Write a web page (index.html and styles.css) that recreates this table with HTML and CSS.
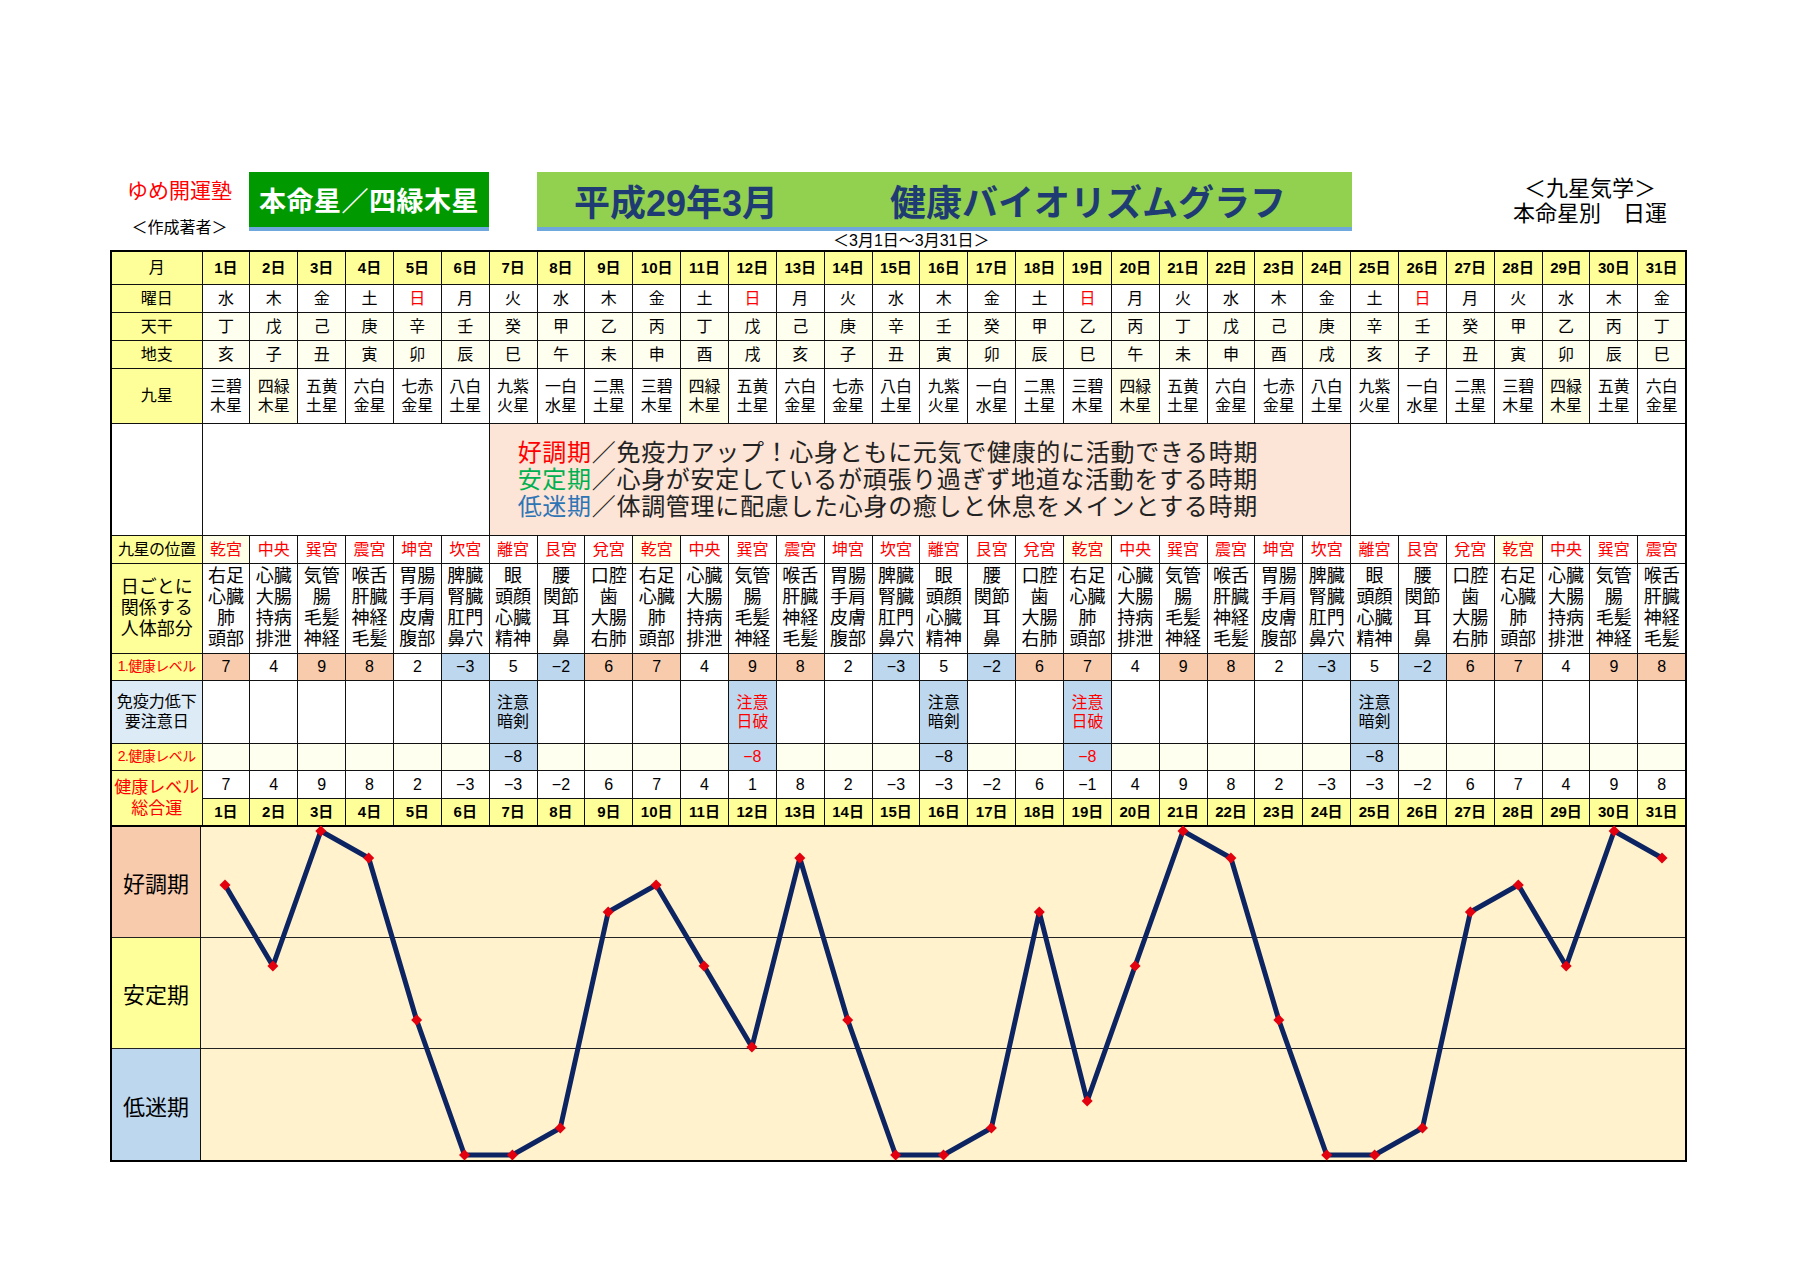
FILE: index.html
```html
<!DOCTYPE html>
<html lang="ja">
<head>
<meta charset="utf-8">
<title>健康バイオリズムグラフ</title>
<link rel="stylesheet" href="styles.css">
</head>
<body>
<div class="page">
  <div class="header">
    <div class="author">
      <div class="org">ゆめ開運塾</div>
      <div class="by">＜作成著者＞</div>
    </div>
    <div class="honmei">本命星／四緑木星</div>
    <div class="titlewrap">
      <div class="title"><span>平成29年3月</span><span>健康バイオリズムグラフ</span></div>
      <div class="range">＜3月1日～3月31日＞</div>
    </div>
    <div class="kigaku">
      <div>＜九星気学＞</div>
      <div>本命星別　日運</div>
    </div>
  </div>

  <table class="grid">
    <colgroup><col class="c0"><col span="31"></colgroup>
    <tr class="r-head days">
      <th class="lab">月</th>
      <td>1日</td><td>2日</td><td>3日</td><td>4日</td><td>5日</td><td>6日</td><td>7日</td><td>8日</td><td>9日</td><td>10日</td><td>11日</td><td>12日</td><td>13日</td><td>14日</td><td>15日</td><td>16日</td><td>17日</td><td>18日</td><td>19日</td><td>20日</td><td>21日</td><td>22日</td><td>23日</td><td>24日</td><td>25日</td><td>26日</td><td>27日</td><td>28日</td><td>29日</td><td>30日</td><td>31日</td>
    </tr>
    <tr class="r-s">
      <th class="lab">曜日</th>
      <td>水</td><td>木</td><td>金</td><td>土</td><td class="red">日</td><td>月</td><td>火</td><td>水</td><td>木</td><td>金</td><td>土</td><td class="red">日</td><td>月</td><td>火</td><td>水</td><td>木</td><td>金</td><td>土</td><td class="red">日</td><td>月</td><td>火</td><td>水</td><td>木</td><td>金</td><td>土</td><td class="red">日</td><td>月</td><td>火</td><td>水</td><td>木</td><td>金</td>
    </tr>
    <tr class="r-s cream">
      <th class="lab">天干</th>
      <td>丁</td><td>戊</td><td>己</td><td>庚</td><td>辛</td><td>壬</td><td>癸</td><td>甲</td><td>乙</td><td>丙</td><td>丁</td><td>戊</td><td>己</td><td>庚</td><td>辛</td><td>壬</td><td>癸</td><td>甲</td><td>乙</td><td>丙</td><td>丁</td><td>戊</td><td>己</td><td>庚</td><td>辛</td><td>壬</td><td>癸</td><td>甲</td><td>乙</td><td>丙</td><td>丁</td>
    </tr>
    <tr class="r-s cream">
      <th class="lab">地支</th>
      <td>亥</td><td>子</td><td>丑</td><td>寅</td><td>卯</td><td>辰</td><td>巳</td><td>午</td><td>未</td><td>申</td><td>酉</td><td>戌</td><td>亥</td><td>子</td><td>丑</td><td>寅</td><td>卯</td><td>辰</td><td>巳</td><td>午</td><td>未</td><td>申</td><td>酉</td><td>戌</td><td>亥</td><td>子</td><td>丑</td><td>寅</td><td>卯</td><td>辰</td><td>巳</td>
    </tr>
    <tr class="r-star">
      <th class="lab">九星</th>
      <td>三碧<br>木星</td><td class="cr">四緑<br>木星</td><td>五黄<br>土星</td><td>六白<br>金星</td><td>七赤<br>金星</td><td>八白<br>土星</td><td>九紫<br>火星</td><td>一白<br>水星</td><td>二黒<br>土星</td>
      <td>三碧<br>木星</td><td class="cr">四緑<br>木星</td><td>五黄<br>土星</td><td>六白<br>金星</td><td>七赤<br>金星</td><td>八白<br>土星</td><td>九紫<br>火星</td><td>一白<br>水星</td><td>二黒<br>土星</td>
      <td>三碧<br>木星</td><td class="cr">四緑<br>木星</td><td>五黄<br>土星</td><td>六白<br>金星</td><td>七赤<br>金星</td><td>八白<br>土星</td><td>九紫<br>火星</td><td>一白<br>水星</td><td>二黒<br>土星</td>
      <td>三碧<br>木星</td><td class="cr">四緑<br>木星</td><td>五黄<br>土星</td><td>六白<br>金星</td>
    </tr>
    <tr class="r-leg">
      <th class="blank"></th>
      <td colspan="6"></td>
      <td colspan="18" class="legend">
        <p><span class="red">好調期</span>／免疫力アップ！心身ともに元気で健康的に活動できる時期</p>
        <p><span class="green">安定期</span>／心身が安定しているが頑張り過ぎず地道な活動をする時期</p>
        <p><span class="blue">低迷期</span>／体調管理に配慮した心身の癒しと休息をメインとする時期</p>
      </td>
      <td colspan="7"></td>
    </tr>
    <tr class="r-s pal">
      <th class="lab lab-pos">九星の位置</th>
      <td class="cr">乾宮</td><td>中央</td><td>巽宮</td><td>震宮</td><td>坤宮</td><td>坎宮</td><td>離宮</td><td>艮宮</td><td>兌宮</td>
      <td class="cr">乾宮</td><td>中央</td><td>巽宮</td><td>震宮</td><td>坤宮</td><td>坎宮</td><td>離宮</td><td>艮宮</td><td>兌宮</td>
      <td class="cr">乾宮</td><td>中央</td><td>巽宮</td><td>震宮</td><td>坤宮</td><td>坎宮</td><td>離宮</td><td>艮宮</td><td>兌宮</td>
      <td class="cr">乾宮</td><td>中央</td><td>巽宮</td><td>震宮</td>
    </tr>
    <tr class="r-body">
      <th class="lab lab-body">日ごとに<br>関係する<br>人体部分</th>
      <td>右足<br>心臓<br>肺<br>頭部</td><td>心臓<br>大腸<br>持病<br>排泄</td><td>気管<br>腸<br>毛髪<br>神経</td><td>喉舌<br>肝臓<br>神経<br>毛髪</td><td>胃腸<br>手肩<br>皮膚<br>腹部</td><td>脾臓<br>腎臓<br>肛門<br>鼻穴</td><td>眼<br>頭顔<br>心臓<br>精神</td><td>腰<br>関節<br>耳<br>鼻</td><td>口腔<br>歯<br>大腸<br>右肺</td>
      <td>右足<br>心臓<br>肺<br>頭部</td><td>心臓<br>大腸<br>持病<br>排泄</td><td>気管<br>腸<br>毛髪<br>神経</td><td>喉舌<br>肝臓<br>神経<br>毛髪</td><td>胃腸<br>手肩<br>皮膚<br>腹部</td><td>脾臓<br>腎臓<br>肛門<br>鼻穴</td><td>眼<br>頭顔<br>心臓<br>精神</td><td>腰<br>関節<br>耳<br>鼻</td><td>口腔<br>歯<br>大腸<br>右肺</td>
      <td>右足<br>心臓<br>肺<br>頭部</td><td>心臓<br>大腸<br>持病<br>排泄</td><td>気管<br>腸<br>毛髪<br>神経</td><td>喉舌<br>肝臓<br>神経<br>毛髪</td><td>胃腸<br>手肩<br>皮膚<br>腹部</td><td>脾臓<br>腎臓<br>肛門<br>鼻穴</td><td>眼<br>頭顔<br>心臓<br>精神</td><td>腰<br>関節<br>耳<br>鼻</td><td>口腔<br>歯<br>大腸<br>右肺</td>
      <td>右足<br>心臓<br>肺<br>頭部</td><td>心臓<br>大腸<br>持病<br>排泄</td><td>気管<br>腸<br>毛髪<br>神経</td><td>喉舌<br>肝臓<br>神経<br>毛髪</td>
    </tr>
    <tr class="r-lv">
      <th class="lab lab-lv">1.健康レベル</th>
      <td class="hi">7</td><td>4</td><td class="hi">9</td><td class="hi">8</td><td>2</td><td class="lo">−3</td><td>5</td><td class="lo">−2</td><td class="hi">6</td>
      <td class="hi">7</td><td>4</td><td class="hi">9</td><td class="hi">8</td><td>2</td><td class="lo">−3</td><td>5</td><td class="lo">−2</td><td class="hi">6</td>
      <td class="hi">7</td><td>4</td><td class="hi">9</td><td class="hi">8</td><td>2</td><td class="lo">−3</td><td>5</td><td class="lo">−2</td><td class="hi">6</td>
      <td class="hi">7</td><td>4</td><td class="hi">9</td><td class="hi">8</td>
    </tr>
    <tr class="r-imm">
      <th class="lab lab-imm">免疫力低下<br>要注意日</th>
      <td></td><td></td><td></td><td></td><td></td><td></td><td class="lo">注意<br>暗剣</td><td></td><td></td><td></td><td></td><td class="lo red">注意<br>日破</td><td></td><td></td><td></td><td class="lo">注意<br>暗剣</td><td></td><td></td><td class="lo red">注意<br>日破</td><td></td><td></td><td></td><td></td><td></td><td class="lo">注意<br>暗剣</td><td></td><td></td><td></td><td></td><td></td><td></td>
    </tr>
    <tr class="r-lv cream">
      <th class="lab lab-lv">2.健康レベル</th>
      <td></td><td></td><td></td><td></td><td></td><td></td><td class="lo">−8</td><td></td><td></td><td></td><td></td><td class="lo red">−8</td><td></td><td></td><td></td><td class="lo">−8</td><td></td><td></td><td class="lo red">−8</td><td></td><td></td><td></td><td></td><td></td><td class="lo">−8</td><td></td><td></td><td></td><td></td><td></td><td></td>
    </tr>
    <tr class="r-s">
      <th class="lab lab-total" rowspan="2">健康レベル<br>総合運</th>
      <td>7</td><td>4</td><td>9</td><td>8</td><td>2</td><td>−3</td><td>−3</td><td>−2</td><td>6</td><td>7</td><td>4</td><td>1</td><td>8</td><td>2</td><td>−3</td><td>−3</td><td>−2</td><td>6</td><td>−1</td><td>4</td><td>9</td><td>8</td><td>2</td><td>−3</td><td>−3</td><td>−2</td><td>6</td><td>7</td><td>4</td><td>9</td><td>8</td>
    </tr>
    <tr class="r-s days">
      <td>1日</td><td>2日</td><td>3日</td><td>4日</td><td>5日</td><td>6日</td><td>7日</td><td>8日</td><td>9日</td><td>10日</td><td>11日</td><td>12日</td><td>13日</td><td>14日</td><td>15日</td><td>16日</td><td>17日</td><td>18日</td><td>19日</td><td>20日</td><td>21日</td><td>22日</td><td>23日</td><td>24日</td><td>25日</td><td>26日</td><td>27日</td><td>28日</td><td>29日</td><td>30日</td><td>31日</td>
    </tr>
  </table>

  <div class="chart">
    <div class="bands">
      <div class="band b1">好調期</div>
      <div class="band b2">安定期</div>
      <div class="band b3">低迷期</div>
    </div>
    <div class="plot">
      <svg width="1484" height="333" viewBox="0 0 1484 333">
        <defs>
          <marker id="dm" viewBox="-6 -6 12 12" refX="0" refY="0" markerWidth="12" markerHeight="12" markerUnits="userSpaceOnUse">
            <path d="M0 -5.5 L5.5 0 L0 5.5 L-5.5 0 Z" fill="#e3000f"/>
          </marker>
        </defs>
        <line x1="0" y1="110.5" x2="1484" y2="110.5" stroke="#222" stroke-width="1"/>
        <line x1="0" y1="221.5" x2="1484" y2="221.5" stroke="#222" stroke-width="1"/>
        <polyline fill="none" stroke="#0d2462" stroke-width="5" stroke-linejoin="round"
          marker-start="url(#dm)" marker-mid="url(#dm)" marker-end="url(#dm)"
          points="24,58 71.9,139 119.8,4 167.7,31 215.6,193 263.5,328 311.4,328 359.3,301 407.2,85 455.1,58 503,139 550.9,220 598.8,31 646.7,193 694.6,328 742.5,328 790.4,301 838.3,85 886.2,274 934.1,139 982,4 1029.9,31 1077.8,193 1125.7,328 1173.6,328 1221.5,301 1269.4,85 1317.3,58 1365.2,139 1413.1,4 1461,31"/>
      </svg>
    </div>
  </div>
</div>
</body>
</html>
```

FILE: styles.css
```css
body {
  margin: 0;
  background: #fff;
  color: #000;
  font-family: "Liberation Sans", "Noto Sans CJK JP", sans-serif;
}

.page {
  padding: 172px 0 0 110px;
  width: 1577px;
}

/* ---------- header ---------- */
.header {
  display: flex;
  height: 78px;
}

.author {
  width: 139px;
  text-align: center;
}

.org {
  color: #ff0000;
  font-size: 21px;
  line-height: 24px;
  margin-top: 7px;
}

.by {
  font-size: 16px;
  line-height: 20px;
  margin-top: 15px;
}

.honmei {
  width: 240px;
  height: 55px;
  background: #009900;
  border-bottom: 4px solid #6fa8dc;
  color: #fff;
  font-size: 27px;
  font-weight: bold;
  display: flex;
  align-items: center;
  justify-content: center;
  letter-spacing: 0.5px;
}

.titlewrap {
  margin-left: 48px;
  width: 815px;
}

.title {
  box-sizing: border-box;
  height: 59px;
  background: #92d050;
  border-bottom: 4px solid #6fa8dc;
  display: flex;
  align-items: center;
  justify-content: space-between;
  padding: 0 66px 0 37px;
  color: #1f3b73;
  font-size: 36px;
  font-weight: bold;
}

.range {
  font-size: 16px;
  line-height: 19px;
  padding-left: 296px;
}

.kigaku {
  flex: 1;
  padding-left: 141px;
  padding-top: 4px;
  text-align: center;
  font-size: 22px;
  line-height: 25px;
}

/* ---------- table ---------- */
.grid {
  border-collapse: collapse;
  table-layout: fixed;
  width: 1577px;
  border: 2px solid #000;
}

.grid .c0 {
  width: 91px;
}

.grid th,
.grid td {
  border: 1px solid #111;
  padding: 0;
  text-align: center;
  vertical-align: middle;
  font-weight: normal;
  font-size: 16px;
  line-height: 19px;
  overflow: hidden;
  white-space: nowrap;
  background: #fff;
}

.grid .lab {
  background: #ffff99;
  font-size: 16px;
}

.grid .blank {
  background: #fff;
}

.r-head { height: 33px; }
.r-s { height: 28px; }
.r-star { height: 55px; }
.r-leg { height: 112px; }
.r-body { height: 90px; }
.r-lv { height: 27px; }
.r-imm { height: 63px; }

.days td {
  background: #ffff99;
  font-weight: bold;
  font-size: 15px;
}

.cream td {
  background: #fffff0;
}

.grid td.cr {
  background: #ffffe8;
}

.pal td {
  color: #ff0000;
}

.grid .lab-pos {
  font-size: 16px;
  letter-spacing: -0.5px;
}

.r-body td {
  font-size: 18px;
  line-height: 21px;
}

.grid .lab-body {
  font-size: 18px;
  line-height: 21px;
}

.grid .lab-lv {
  color: #ff0000;
  font-size: 14px;
  letter-spacing: -0.5px;
}

.grid .lab-imm {
  background: #ddebf7;
  font-size: 16px;
  line-height: 20px;
}

.grid .lab-total {
  color: #ff0000;
  font-size: 17px;
  line-height: 21px;
}

.grid td.hi {
  background: #f8cbad;
}

.grid td.lo {
  background: #bdd7ee;
}

.red {
  color: #ff0000;
}

.green {
  color: #00b050;
}

.blue {
  color: #2e75b6;
}

.grid .legend {
  background: #fce4d6;
  text-align: left;
  padding-left: 28px;
  font-size: 24px;
  line-height: 27px;
  letter-spacing: 0.7px;
  color: #222;
}

.legend p {
  margin: 0;
}

/* ---------- chart ---------- */
.chart {
  display: flex;
  width: 1577px;
  box-sizing: border-box;
  border: 2px solid #000;
  border-top: 0;
}

.bands {
  width: 88px;
  border-right: 1px solid #111;
  flex: none;
}

.band {
  box-sizing: border-box;
  height: 111px;
  display: flex;
  align-items: center;
  justify-content: center;
  font-size: 22px;
  border-bottom: 1px solid #222;
}

.band.b3 {
  border-bottom: 0;
}

.b1 { background: #f8cbad; }
.b2 { background: #ffff99; }
.b3 { background: #bdd7ee; }

.plot {
  flex: 1;
  background: #fff2cc;
}

.plot svg {
  display: block;
  overflow: visible;
}
```
